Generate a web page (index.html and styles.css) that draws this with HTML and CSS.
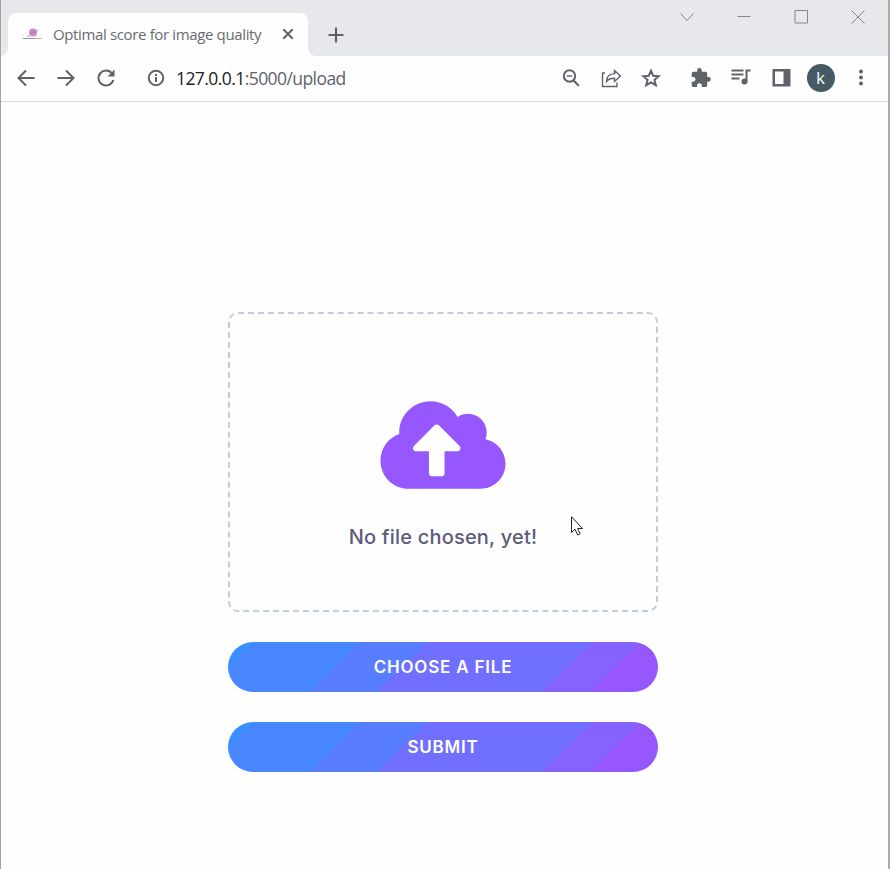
FILE: index.html
```html
<!DOCTYPE html>
<html lang="en">
<head>
<meta charset="utf-8">
<title>Optimal score for image quality</title>
<link rel="stylesheet" href="styles.css">
</head>
<body>
<div class="window">
  <header class="tabs">
    <svg class="tab-shape" width="322" height="43" viewBox="0 0 322 43"><path d="M0 43Q7 42 7 34V9Q7 0 16 0H298Q307 0 307 9V34Q307 43 316 43Z" fill="#fefefe"/></svg>
    <div class="tab">
      <svg width="20" height="16" viewBox="0 0 20 16"><circle cx="10" cy="6.500" r="4" fill="#bd8fcd"/><circle cx="10" cy="6.500" r="2" fill="#d7799b"/><path d="M4 10.500Q12 10 15 3.500" stroke="#b9a8d0" fill="none"/><path d="M0 12.500h12" stroke="#9297a6"/><path d="M12 12.500h7" stroke="#efa3c1"/></svg>
      <span class="tab-title">Optimal score for image quality</span>
      <svg class="tab-close" width="12" height="12" viewBox="0 0 12 12"><path d="M1.300 1.300l9.400 9.400M10.700 1.300L1.300 10.700" stroke="#5f6368" stroke-width="2"/></svg>
    </div>
    <svg class="new-tab" width="16" height="16" viewBox="0 0 16 16"><path d="M8 .5v15M.5 8h15" stroke="#5f6368" stroke-width="2.200"/></svg>
    <div class="controls">
      <svg width="14" height="14" viewBox="0 0 14 14"><path d="M.5 3.500L7 10.500 13.500 3.500"/></svg>
      <svg width="14" height="14" viewBox="0 0 14 14"><path d="M.5 6.500h13"/></svg>
      <svg width="14" height="14" viewBox="0 0 14 14"><path d="M1 .5h12.500v12.500H1z"/></svg>
      <svg width="14" height="14" viewBox="0 0 14 14"><path d="M.5.5l13 13M13.500.5l-13 13"/></svg>
    </div>
  </header>
  <nav class="toolbar">
    <div class="nav-icons">
      <svg width="24" height="24" viewBox="0 0 24 24"><path d="M20.500 12H5M12 4.500L4.500 12l7.500 7.500" class="line"/></svg>
      <svg width="24" height="24" viewBox="0 0 24 24"><path d="M3.500 12H19M12 4.500l7.500 7.500-7.500 7.500" class="line"/></svg>
      <svg width="24" height="24" viewBox="0 0 24 24"><path d="M18 7.500A7.500 7.500 0 1 0 19.300 14" class="line"/><path d="M20.500 3.500v7h-7z" fill="#5f6368"/></svg>
    </div>
    <svg class="info" width="18" height="18" viewBox="0 0 18 18"><circle cx="9" cy="9" r="7.200" class="line"/><path d="M9 8v5M9 5v2" class="line"/></svg>
    <div class="url"><span>127.0.0.1</span>:5000/upload</div>
    <div class="actions">
      <svg width="20" height="20" viewBox="0 0 20 20"><circle cx="8.500" cy="8" r="5.700" class="line"/><path d="M12.500 12.500l5.300 5.300" class="line"/><path d="M5.700 8h5.600" class="line thin"/></svg>
      <svg width="20" height="20" viewBox="0 0 20 20"><path d="M4 5H1.500v13.500h14.500v-4" class="line thin"/><path d="M13.500 2.500l6 5.500-6 5.500v-3.200c-3.500-.1-6 .7-8 3.200 0-4.600 3-7.600 8-7.900z" class="line thin"/></svg>
      <svg width="20" height="20" viewBox="0 0 20 20"><path d="M10 2.700l2.200 5 5.500.5-4.200 3.600 1.300 5.400-4.800-2.900-4.800 2.900 1.300-5.400-4.200-3.600 5.500-.5z" class="line"/></svg>
      <svg class="ext" width="20" height="20" viewBox="1.200 1 22 22"><path d="M20.500 11H19V7c0-1.100-.9-2-2-2h-4V3.500a2.500 2.500 0 0 0-5 0V5H4c-1.100 0-2 .9-2 2v3.800h1.500a2.700 2.700 0 0 1 0 5.400H2V20c0 1.100.9 2 2 2h3.800v-1.500a2.700 2.700 0 0 1 5.400 0V22H17c1.100 0 2-.9 2-2v-4h1.500a2.500 2.500 0 0 0 0-5z" fill="#5f6368"/></svg>
      <svg width="20" height="20" viewBox="0 0 20 20"><path d="M.5 2.500h12M.5 6.500h12M.5 10.500h8" class="line"/><path d="M19.500 2.500h-4v11" class="line"/><circle cx="13.500" cy="13.500" r="3" fill="#5f6368"/></svg>
      <svg width="20" height="20" viewBox="0 0 20 20"><path d="M1.500 1h18v17.500H1.500zM4 3.500V16h8.500V3.500z" fill="#5f6368" fill-rule="evenodd"/></svg>
      <div class="avatar">k</div>
      <svg width="20" height="20" viewBox="0 0 20 20" fill="#5f6368"><circle cx="10" cy="3.500" r="2"/><circle cx="10" cy="9.500" r="2"/><circle cx="10" cy="15.500" r="2"/></svg>
    </div>
  </nav>
  <main>
    <section class="drop">
      <svg class="cloud" width="126" height="100" viewBox="0 0 640 512"><path fill="#9658fe" d="M537.600 226.600c4.100-10.700 6.400-22.400 6.400-34.600 0-53-43-96-96-96-19.700 0-38.100 6-53.300 16.200C367 64.200 315.300 32 256 32c-88.400 0-160 71.600-160 160 0 2.700.1 5.400.2 8.100C40.200 219.800 0 273.200 0 336c0 79.500 64.500 144 144 144h368c70.700 0 128-57.300 128-128 0-61.900-44-113.600-102.400-125.400zM393.400 288H328v112c0 8.800-7.200 16-16 16h-48c-8.800 0-16-7.200-16-16V288h-65.400c-14.300 0-21.400-17.200-11.300-27.300l105.400-105.400c6.200-6.200 16.400-6.200 22.600 0l105.400 105.400c10.100 10.100 2.900 27.300-11.300 27.300z"/></svg>
      <p>No file chosen, yet!</p>
    </section>
    <button class="choose">Choose a file</button>
    <button class="submit">Submit</button>
  </main>
  <svg class="cursor" width="12" height="20" viewBox="0 0 12 20"><path d="M.5.8v15.700l3.500-3.300 2.700 5.800 2.500-1.200-2.600-5.300h4.900z" fill="#fff" stroke="#222"/></svg>
</div>
</body>
</html>
```
FILE: styles.css
```css
* { box-sizing: border-box; }
body { margin: 0; background: #a9a9a9; }
.window {
  position: relative;
  width: 888px;
  height: 869px;
  border-left: 1px solid #a2a2a2;
  background: #fefefe;
  display: flex;
  flex-direction: column;
  overflow: hidden;
}
svg { display: block; flex: none; }
.line { fill: none; stroke: #5f6368; stroke-width: 2; }
.thin { stroke-width: 1.4; }
.tabs { position: relative; height: 56px; background: #e7e8ec; display: flex; }
.tab-shape { position: absolute; left: 0; top: 13px; }
.tab {
  position: relative;
  width: 307px;
  height: 43px;
  margin-top: 13px;
  padding: 0 0 1px 22px;
  display: flex;
  align-items: center;
}
.tab-title {
  width: 210px;
  margin-left: 10px;
  font: 15px/20px "Open Sans", sans-serif;
  letter-spacing: -.36px;
  white-space: nowrap;
  color: #686b70;
}
.tab-close { margin-left: 19px; }
.new-tab { margin: 26.500px 0 0 19.500px; }
.controls { margin: 10px 23px 0 auto; display: flex; gap: 43px; }
.controls path { fill: none; stroke: #85868b; stroke-width: 1; }
.toolbar {
  height: 46px;
  padding-bottom: 1px;
  border-bottom: 1px solid #d9dadd;
  display: flex;
  align-items: center;
}
.nav-icons { display: flex; gap: 16px; padding-left: 12.500px; }
.info { margin-left: 29px; }
.url {
  margin-left: 11.500px;
  font: 17.500px/24px "Open Sans", sans-serif;
  letter-spacing: -.57px;
  white-space: nowrap;
  color: #5f6368;
}
.url span { color: #202124; }
.actions { display: flex; align-items: center; gap: 20px; margin: 0 17.500px 0 auto; }
.ext { margin-left: 10px; }
.avatar {
  width: 28px;
  height: 28px;
  margin: 0 -4px;
  border-radius: 50%;
  background: #455a64;
  color: #fff;
  font: 17px/27px "Open Sans", sans-serif;
  text-align: center;
}
main { width: 430px; margin: 210px 0 0 227px; display: flex; flex-direction: column; gap: 30px; }
.drop {
  height: 300px;
  border: 2px dashed #c2cdda;
  border-radius: 10px;
  display: flex;
  flex-direction: column;
  align-items: center;
  padding-top: 80.500px;
}
p {
  margin: 27.500px 0 0;
  font: 500 20px/30px Inter, sans-serif;
  letter-spacing: .2px;
  white-space: nowrap;
  color: #5b5b7b;
}
button {
  height: 50px;
  border: 0;
  padding: 0;
  border-radius: 25px;
  background: linear-gradient(135deg, #3a8ffe 5.300%, #4887ff 5.800%, #4887ff 27.400%, #587eff 27.900%, #587eff 41.200%, #706fff 41.600%, #706fff 75.800%, #8662ff 76.200%, #8662ff 85.800%, #9658fe 86.200%);
  color: #fff;
  font: 600 17px/50px Inter, sans-serif;
  text-transform: uppercase;
  letter-spacing: .8px;
}
.cursor { position: absolute; left: 570px; top: 516px; }
```
